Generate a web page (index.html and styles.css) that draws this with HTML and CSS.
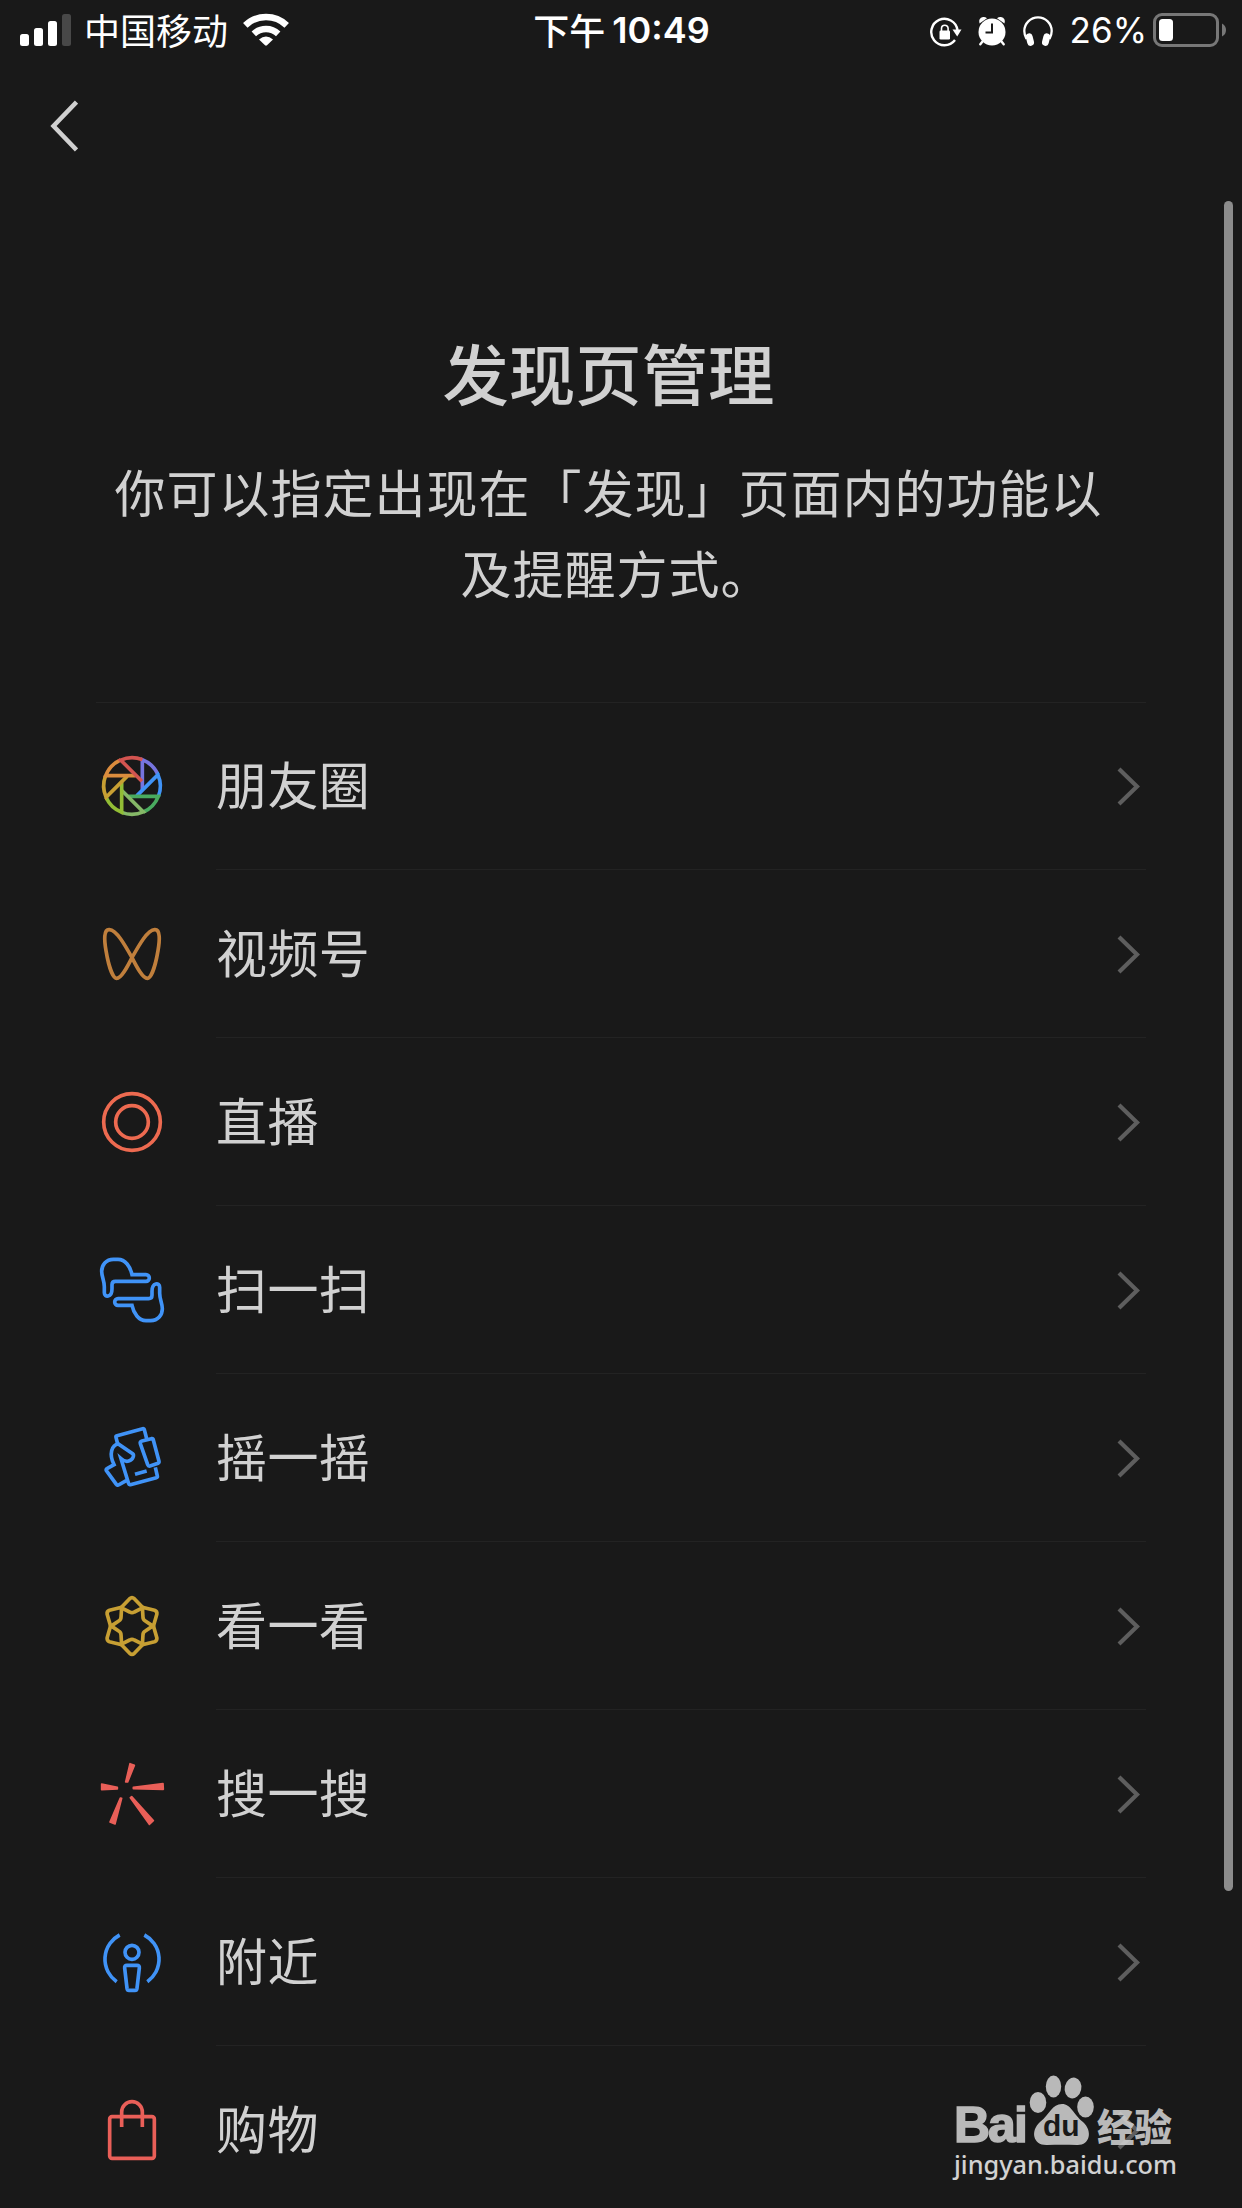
FILE: index.html
```html
<!DOCTYPE html>
<html lang="zh-CN">
<head>
<meta charset="utf-8">
<title>发现页管理</title>
<link rel="stylesheet" href="styles.css">
</head>
<body>
<div class="screen">
  <header class="status">
    <div class="status-left">
      <svg class="signal" width="51" height="32" viewBox="0 0 51 32"><g fill="#fff"><rect y="20" width="9" height="12" rx="2.5"/><rect x="14" y="14" width="9" height="18" rx="2.5"/><rect x="28" y="7" width="9" height="25" rx="2.5"/></g><rect x="42" width="9" height="32" rx="2.5" fill="#484848"/></svg>
      <span class="carrier">中国移动</span>
      <svg class="wifi" width="46" height="33" viewBox="0 0 46 33"><g fill="none" stroke="#fff" stroke-width="6.5"><path d="M2.300 12.300A30 30 0 0 1 43.700 12.300"/><path d="M10.800 20.800A18 18 0 0 1 35.200 20.800"/></g><path d="M16 26.500Q23 20.500 30 26.500L24 32.300Q23 33.200 22 32.300Z" fill="#fff"/></svg>
    </div>
    <div class="clock"><span class="clock-cn">下午</span><span class="clock-num">10:49</span></div>
    <div class="status-right">
      <svg class="lock" width="32" height="32" viewBox="0 0 32 32"><path d="M27.500 14A13.200 13.200 0 1 0 25 24" fill="none" stroke="#fff" stroke-width="2.400"/><path d="M22.500 13.500H31.500L27.200 20.500Z" fill="#fff"/><rect x="9.500" y="14.500" width="10.500" height="9" rx="1.300" fill="#fff"/><path d="M11.500 15V12.500A3.300 3.300 0 0 1 18.100 12.500V15" fill="none" stroke="#fff" stroke-width="1.600"/></svg>
      <svg class="alarm" width="28" height="30" viewBox="0 0 28 30"><g fill="#fff"><circle cx="14" cy="16" r="13.500"/><path d="M1.500 7.500Q0 2 5 1Q7 .6 9 2.200Z"/><path d="M26.500 7.500Q28 2 23 1Q21 .6 19 2.200Z"/></g><path d="M4.500 25.500L2.300 28.300M23.500 25.500L25.700 28.300" stroke="#fff" stroke-width="2.400" stroke-linecap="round"/><path d="M14 7.500V16.500H7.500" fill="none" stroke="#191919" stroke-width="2"/></svg>
      <svg class="phones" width="30" height="31" viewBox="0 0 30 31"><path d="M3.500 23Q1.300 19 1.300 15A13.700 13.700 0 0 1 28.700 15Q28.700 19 26.500 23" fill="none" stroke="#fff" stroke-width="2.300"/><rect x="3.500" y="17.300" width="6.800" height="12.600" rx="3.400" fill="#fff" transform="rotate(-14 7 23.500)"/><rect x="19.700" y="17.300" width="6.800" height="12.600" rx="3.400" fill="#fff" transform="rotate(14 23 23.500)"/></svg>
      <span class="percent">26%</span>
      <svg class="battery" width="73" height="34" viewBox="0 0 73 34"><rect x="1.500" y="1.500" width="63" height="31" rx="7.500" fill="none" stroke="#777" stroke-width="3"/><rect x="6" y="6" width="14" height="22" rx="3.500" fill="#fff"/><path d="M69 10.500Q73 12.500 73 17Q73 21.500 69 23.500Z" fill="#777"/></svg>
    </div>
  </header>

  <nav class="nav">
    <svg width="28" height="52" viewBox="0 0 28 52"><path d="M26.500 2L3.500 26L26.500 50" fill="none" stroke="#d0d0d0" stroke-width="4.500"/></svg>
  </nav>

  <section class="intro">
    <h1>发现页管理</h1>
    <p>你可以指定出现在「发现」页面内的功能以</p>
    <p class="second">及提醒方式。</p>
  </section>

  <ul class="list">
    <li class="row">
      <svg class="icon" viewBox="0 0 216 216">
        <path stroke="#7674df" d="M139 119V29A85 85 0 0 1 186 74"/>
        <path stroke="#4093f7" d="M139 119V29A85 85 0 0 1 186 74" transform="rotate(45 108 108)"/>
        <path stroke="#49ab5f" d="M139 119V29A85 85 0 0 1 186 74" transform="rotate(90 108 108)"/>
        <path stroke="#85b867" d="M139 119V29A85 85 0 0 1 186 74" transform="rotate(135 108 108)"/>
        <path stroke="#92bd35" d="M139 119V29A85 85 0 0 1 186 74" transform="rotate(180 108 108)"/>
        <path stroke="#c79f33" d="M139 119V29A85 85 0 0 1 186 74" transform="rotate(225 108 108)"/>
        <path stroke="#db8c3d" d="M139 119V29A85 85 0 0 1 186 74" transform="rotate(270 108 108)"/>
        <path stroke="#d35450" d="M139 119V29A85 85 0 0 1 186 74" transform="rotate(315 108 108)"/>
      </svg>
      <div class="cell"><span>朋友圈</span><svg class="more" viewBox="0 0 24 40"><path d="M3 3L21 20.500L3 38"/></svg></div>
    </li>
    <li class="row">
      <svg class="icon orange" viewBox="0 0 216 216"><path d="M108 119C88 83 62 36 40 35C22 34 25 68 30 98C37 140 50 181 62 181C76 181 94 147 108 119C128 83 154 36 176 35C194 34 191 68 186 98C179 140 166 181 154 181C140 181 122 147 108 119Z"/></svg>
      <div class="cell"><span>视频号</span><svg class="more" viewBox="0 0 24 40"><path d="M3 3L21 20.500L3 38"/></svg></div>
    </li>
    <li class="row">
      <svg class="icon coral" viewBox="0 0 216 216"><circle cx="108" cy="108" r="85"/><circle cx="108" cy="108" r="49"/></svg>
      <div class="cell"><span>直播</span><svg class="more" viewBox="0 0 24 40"><path d="M3 3L21 20.500L3 38"/></svg></div>
    </li>
    <li class="row">
      <svg class="icon blue" viewBox="0 0 216 216">
        <path d="M150 62H108C103 38 88 16 66 16H52C30 16 17 33 17 52C17 68 25 80 25 98V116C25 131 48 132 48 104V92Q48 82 58 82H150A10 10 0 0 0 150 62Z"/>
        <path d="M150 62H108C103 38 88 16 66 16H52C30 16 17 33 17 52C17 68 25 80 25 98V116C25 131 48 132 48 104V92Q48 82 58 82H150A10 10 0 0 0 150 62Z" transform="rotate(180 108 108)"/>
      </svg>
      <div class="cell"><span>扫一扫</span><svg class="more" viewBox="0 0 24 40"><path d="M3 3L21 20.500L3 38"/></svg></div>
    </li>
    <li class="row">
      <svg class="icon blue" viewBox="0 0 216 216">
        <path d="M65 66L60 46Q59 42 63 41L140 20Q144 19 145 23L152 50"/>
        <path d="M138 57L166 50Q171 49 172 54L189 118Q190 122 186 124L162 132Q157 133 155 128L133 65Q131 59 138 57Z"/>
        <path d="M178 136L184 162Q185 166 181 167L103 188Q99 189 98 185L75 110C83 117 92 119 98 117C112 113 115 99 110 95L67 66C47 69 38 96 54 128L33 140Q29 142 31 146L61 187Q64 192 69 188L92 175"/>
        <path d="M117 157L152 147"/>
      </svg>
      <div class="cell"><span>摇一摇</span><svg class="more" viewBox="0 0 24 40"><path d="M3 3L21 20.500L3 38"/></svg></div>
    </li>
    <li class="row">
      <svg class="icon gold" viewBox="0 0 216 216">
        <path d="M141 53L115 26Q108 20 101 26L75 53L101 66Q108 70 115 66Z"/>
        <path d="M141 53L115 26Q108 20 101 26L75 53L101 66Q108 70 115 66Z" transform="rotate(60 108 108)"/>
        <path d="M141 53L115 26Q108 20 101 26L75 53L101 66Q108 70 115 66Z" transform="rotate(120 108 108)"/>
        <path d="M141 53L115 26Q108 20 101 26L75 53L101 66Q108 70 115 66Z" transform="rotate(180 108 108)"/>
        <path d="M141 53L115 26Q108 20 101 26L75 53L101 66Q108 70 115 66Z" transform="rotate(240 108 108)"/>
        <path d="M141 53L115 26Q108 20 101 26L75 53L101 66Q108 70 115 66Z" transform="rotate(300 108 108)"/>
      </svg>
      <div class="cell"><span>看一看</span><svg class="more" viewBox="0 0 24 40"><path d="M3 3L21 20.500L3 38"/></svg></div>
    </li>
    <li class="row">
      <svg class="icon rays" viewBox="0 0 216 216"><path d="M102 17L115 22L95 72L89 72ZM17 78L64 88V93L17 95ZM112 88L201 77L202 94L112 92ZM73 120L77 121L57 198L42 192ZM103 119L107 116L172 188L160 199Z"/></svg>
      <div class="cell"><span>搜一搜</span><svg class="more" viewBox="0 0 24 40"><path d="M3 3L21 20.500L3 38"/></svg></div>
    </li>
    <li class="row">
      <svg class="icon blue" viewBox="0 0 216 216"><path d="M71 27A82 82 0 0 0 62 167M145 27A82 82 0 0 1 154 167"/><circle cx="108" cy="79" r="21"/><path d="M93 118H123Q131 118 130 126L123 187Q122 193 117 193H99Q94 193 93 187L86 126Q85 118 93 118Z"/></svg>
      <div class="cell"><span>附近</span><svg class="more" viewBox="0 0 24 40"><path d="M3 3L21 20.500L3 38"/></svg></div>
    </li>
    <li class="row">
      <svg class="icon red" viewBox="0 0 216 216"><rect x="41" y="68" width="134" height="125" rx="7"/><path d="M77 99V54A31 31 0 0 1 139 54V99"/></svg>
      <div class="cell"><span>购物</span><svg class="more" viewBox="0 0 24 40"><path d="M3 3L21 20.500L3 38"/></svg></div>
    </li>
  </ul>

  <div class="scrollbar"></div>

  <div class="watermark">
    <div class="brand">
      <span class="bai">Bai</span>
      <span class="paw">
        <svg width="66" height="72" viewBox="0 0 66 72" fill="#d0d0d0"><ellipse cx="9" cy="27.500" rx="8.300" ry="10.500"/><ellipse cx="24.500" cy="11.500" rx="7.700" ry="11"/><ellipse cx="44" cy="13" rx="8.300" ry="10.500" transform="rotate(12 44 13)"/><ellipse cx="56.500" cy="32" rx="8.300" ry="10.500"/><path d="M33 29C42 29 44 39 54 47C64 56 61 70.500 48 70C38 69.500 28 69.500 18 70C4 70.500 1 56 11 47C21 39 23 29 33 29Z"/></svg>
        <span class="du">du</span>
      </span>
      <span class="exp">经验</span>
    </div>
    <div class="site">jingyan.baidu.com</div>
  </div>
</div>
</body>
</html>
```
FILE: styles.css
```css
* { box-sizing: border-box; }

body {
  margin: 0;
  background: #191919;
  color: #d1d1d1;
  font-family: Inter, "Noto Sans CJK SC", sans-serif;
}

.screen {
  position: relative;
  width: 1242px;
  height: 2208px;
  overflow: hidden;
}

svg { display: block; flex: none; }

.status {
  display: grid;
  grid-template-columns: 1fr auto 1fr;
  height: 60px;
  padding: 0 16px 0 20px;
  color: #fff;
  font-size: 36px;
  line-height: 56px;
  white-space: nowrap;
}

.status-left,
.status-right,
.clock { display: flex; align-items: center; }

.status-right { justify-content: flex-end; }
.carrier { margin: -3px 15px 0 13px; font-family: "Noto Sans CJK SC", sans-serif; }
.wifi { margin-top: -1px; }
.clock { gap: 7px; margin-right: 3px; font-weight: 500; }
.clock-cn { margin-top: -3px; font-family: "Noto Sans CJK SC", sans-serif; }
.clock-num { font-weight: 600; font-size: 36px; }
.lock { margin: 3px 16px 0 0; }
.alarm { margin: 2px 17px 0 0; }
.phones { margin: 2px 17px 0 0; }
.percent { margin-right: 6px; font-size: 35px; }

.nav { height: 132px; padding: 40px 0 0 50px; }

.intro {
  height: 510px;
  padding: 134px 121px 0 96px;
  text-align: center;
  font-family: "Noto Sans CJK SC", sans-serif;
  white-space: nowrap;
}

.intro h1 {
  margin: 0 0 35px;
  font-size: 66.4px;
  font-weight: 500;
  line-height: 90px;
}

.intro p {
  margin: 0;
  font-size: 51px;
  line-height: 81px;
  letter-spacing: 1px;
}

.intro .second { padding-left: 16px; }

.list {
  margin: 0 96px;
  padding: 0;
  list-style: none;
  box-shadow: inset 0 1px #232323;
}

.row { display: flex; align-items: center; height: 168px; }

.icon {
  width: 72px;
  height: 72px;
  margin-right: 48px;
  fill: none;
  stroke-width: 11;
}

.orange { stroke: #c07f3c; }
.coral { stroke: #ed6a50; }
.blue { stroke: #4093f7; }
.gold { stroke: #c79f33; stroke-linejoin: round; }
.red { stroke: #e95f58; }
.rays { fill: #e95f58; stroke: #e95f58; stroke-width: 5; stroke-linejoin: round; }

.cell {
  display: flex;
  flex: 1;
  align-items: center;
  justify-content: space-between;
  height: 168px;
  padding-right: 6px;
  border-bottom: 1px solid #232323;
  font-family: "Noto Sans CJK SC", sans-serif;
  font-size: 51px;
  letter-spacing: .4px;
}

.cell span { padding-bottom: 5px; }

.more {
  width: 24px;
  height: 40px;
  fill: none;
  stroke: #5e5e5e;
  stroke-width: 4.2;
}

.scrollbar {
  position: absolute;
  top: 201px;
  left: 1224px;
  width: 9px;
  height: 1690px;
  border-radius: 5px;
  background: #8c8c8c;
}

.watermark {
  position: absolute;
  top: 2075px;
  left: 954px;
  width: 222px;
  color: #d0d0d0;
  white-space: nowrap;
  opacity: .88;
}

.brand { display: flex; height: 72px; align-items: flex-end; }

.bai {
  width: 75px;
  font: 700 50px/44px "Liberation Sans", sans-serif;
  letter-spacing: -2px;
  -webkit-text-stroke: 1.5px #d0d0d0;
}

.paw { position: relative; width: 66px; height: 72px; margin-right: 2px; }

.du {
  position: absolute;
  left: 14px;
  top: 34px;
  color: #191919;
  font: 700 30px/34px "Liberation Sans", sans-serif;
}

.exp { padding-bottom: 3px; font: 900 37.500px/38px "Noto Sans CJK SC", sans-serif; }

.site {
  margin-top: 1px;
  color: #ececec;
  font: 500 25.300px/32px "Noto Sans", sans-serif;
}
```
